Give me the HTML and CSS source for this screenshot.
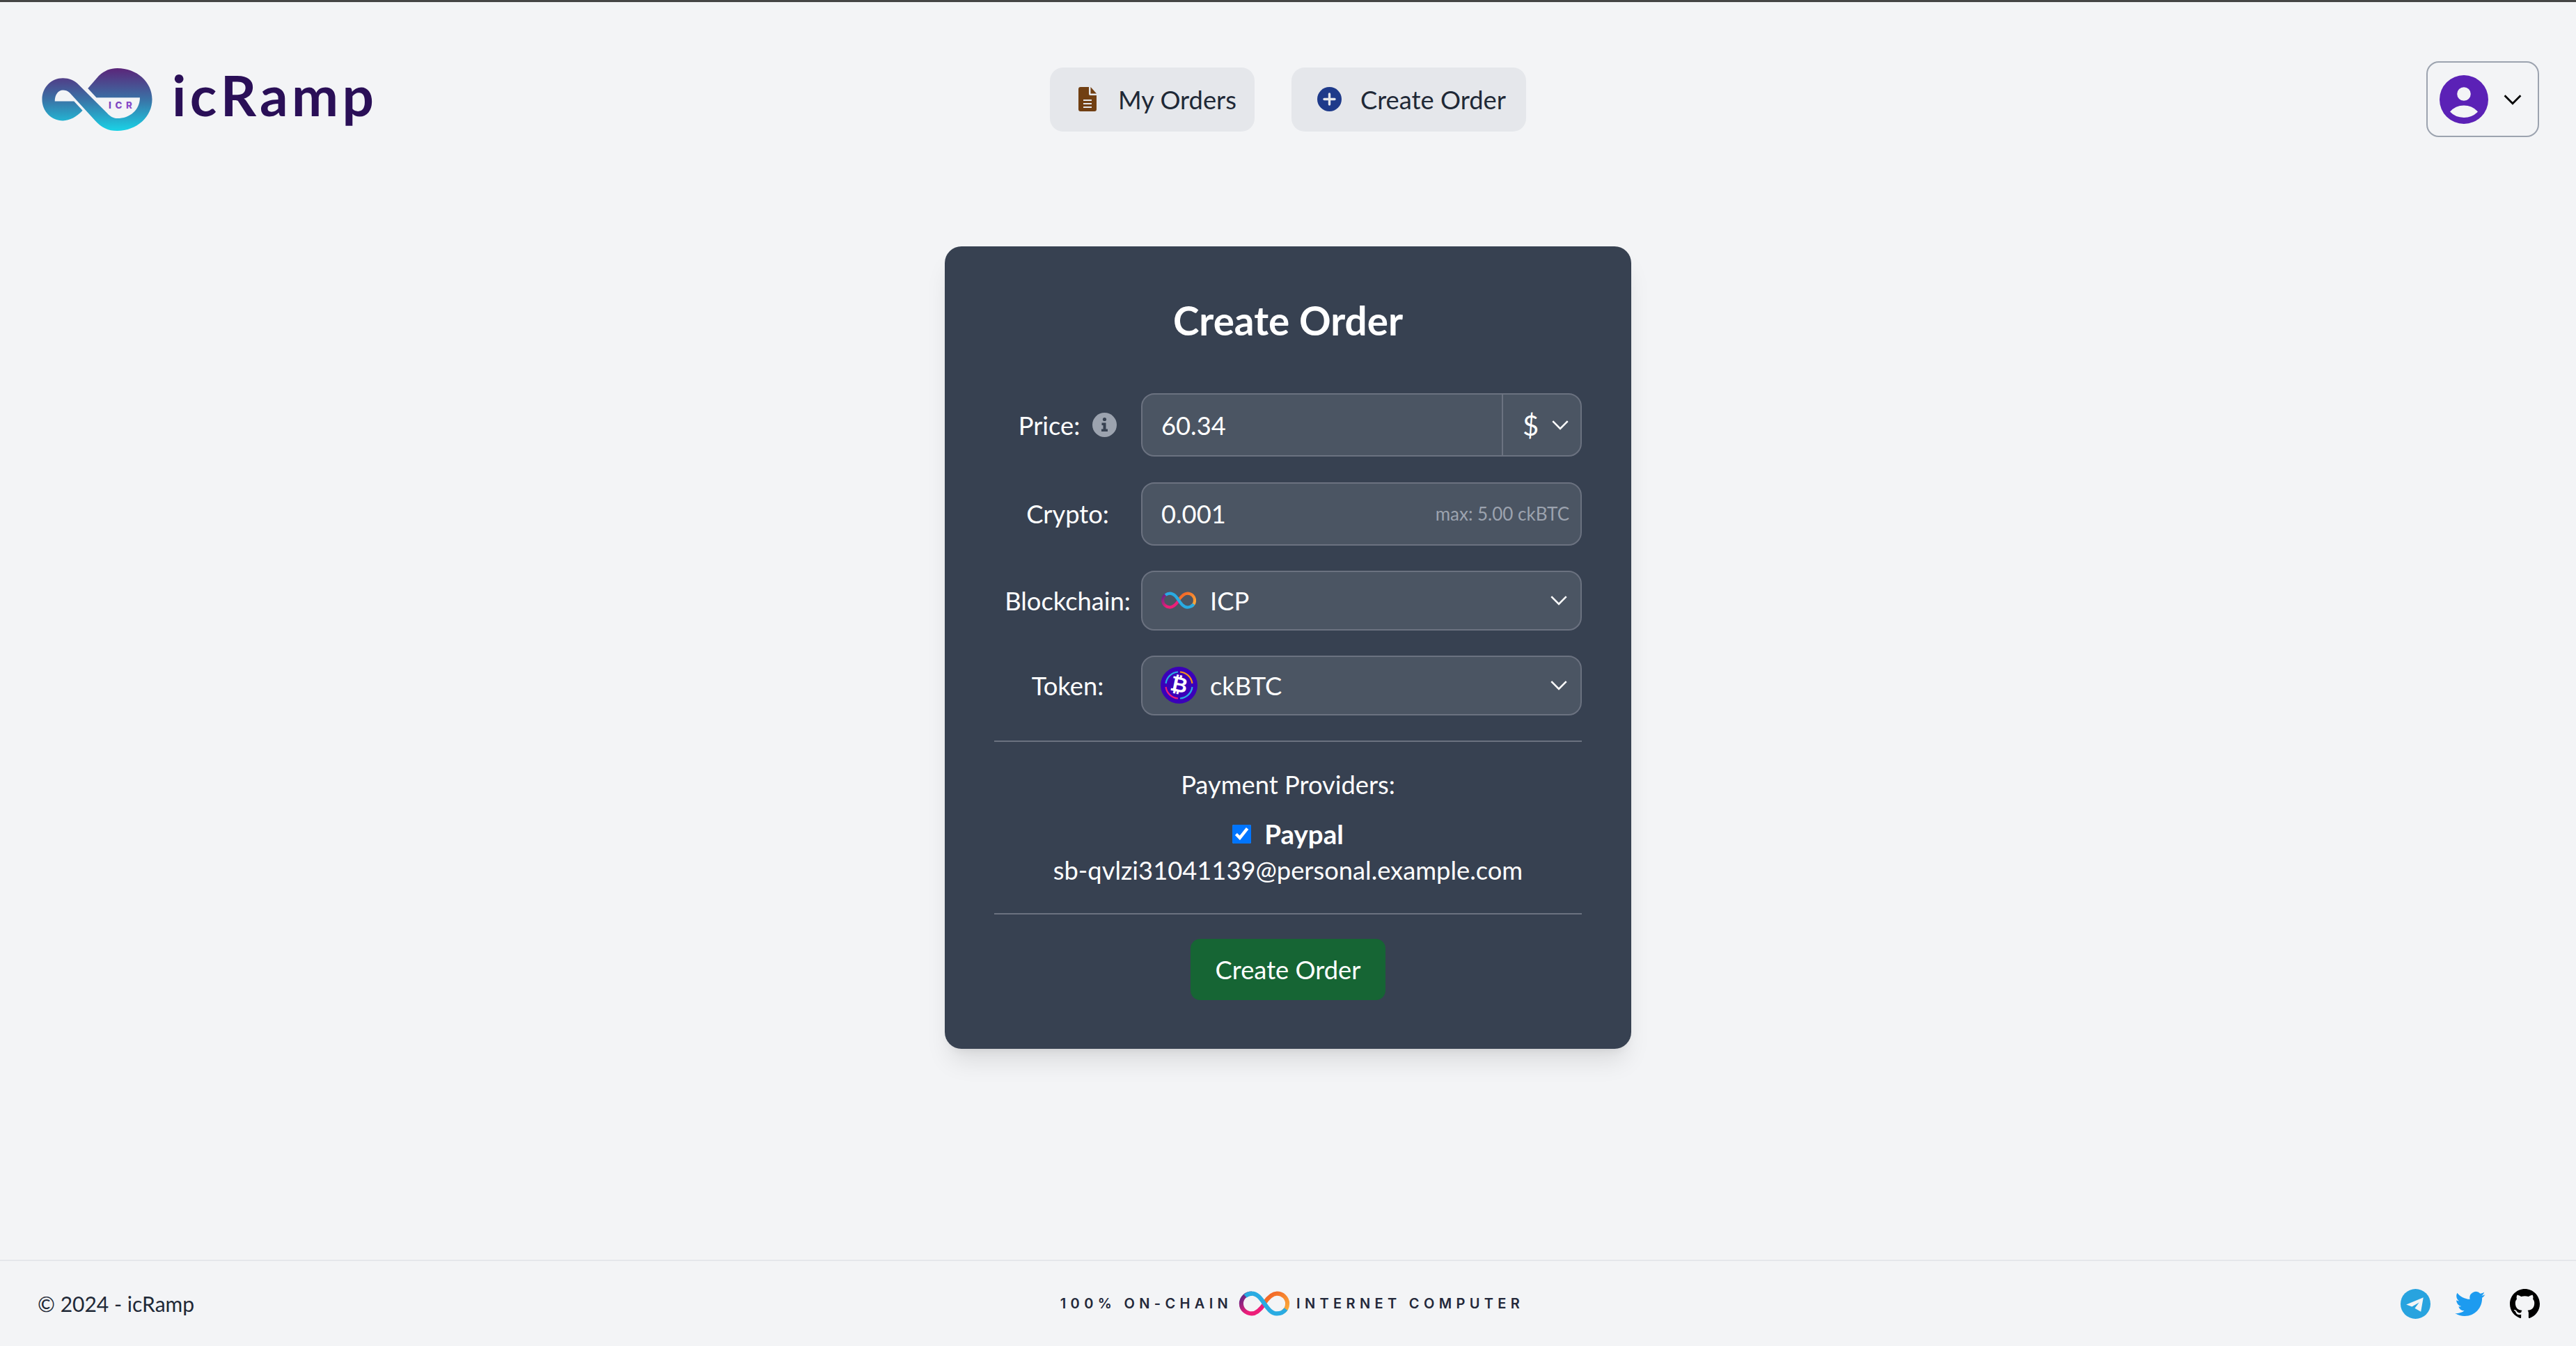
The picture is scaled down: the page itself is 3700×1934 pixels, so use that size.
FILE: index.html
```html
<!DOCTYPE html>
<html lang="en">
<head>
    <meta charset="UTF-8">
    <meta name="viewport" content="width=device-width, initial-scale=1.0">
    <title>icRamp</title>
    <link rel="stylesheet" href="styles.css">
</head>
<body>
    <svg class="defs" width="0" height="0">
        <defs>
            <linearGradient id="logoFill" x1="0" y1="0" x2="0" y2="1">
                <stop offset="0" stop-color="#5b2579"/>
                <stop offset="0.5" stop-color="#3a72a6"/>
                <stop offset="1" stop-color="#19d2e6"/>
            </linearGradient>
            <linearGradient id="icrFill" x1="0" y1="0" x2="1" y2="1">
                <stop offset="0" stop-color="#6a3bb5"/>
                <stop offset="1" stop-color="#9a52d6"/>
            </linearGradient>
            <linearGradient id="icpLeft" x1="0" y1="0" x2="1" y2="1">
                <stop offset="0" stop-color="#522785"/>
                <stop offset="0.6" stop-color="#ed1e79"/>
                <stop offset="1" stop-color="#ed1e79"/>
            </linearGradient>
            <linearGradient id="icpRight" x1="0" y1="0" x2="1" y2="1">
                <stop offset="0" stop-color="#f15a24"/>
                <stop offset="1" stop-color="#fbb03b"/>
            </linearGradient>
            <symbol id="icpMark" viewBox="0 0 100 50">
                <path d="M25 5C13 5 4 14 4 25C4 36 13 45 25 45C35 45 43 36 50 26" fill="none" stroke="url(#icpLeft)" stroke-width="8.5"/>
                <path d="M50 24C57 14 65 5 75 5C87 5 96 14 96 25C96 33 92 39 86 42" fill="none" stroke="url(#icpRight)" stroke-width="8.5"/>
                <path d="M12 10C16 6.500 20 5 25 5C36 5 43 15 50 25C57 35 64 45 75 45C82 45 88 43 93 36" fill="none" stroke="#29abe2" stroke-width="8.5"/>
            </symbol>
            <symbol id="chevron" viewBox="0 0 24 14">
                <path d="M2 2l10 10L22 2" fill="none" stroke="currentColor" stroke-width="2.400"/>
            </symbol>
        </defs>
    </svg>

    <header class="topbar">
        <a class="brand" href="#">
            <svg class="brand-mark" viewBox="60 45 476 271">
                <path fill="url(#logoFill)" d="M235 228C210 255 180 272 150 272C100 272 60 232 60 180C60 128 100 88 150 88C175 88 200 98 216 114L342 240C352 252 368 262 385 262C440 262 483 225 483 172L295 172L258 132L305 78C330 55 355 45 385 45C470 45 536 105 536 180C536 255 470 316 385 316C345 316 315 300 290 272L180 152C170 142 160 140 150 140C130 140 115 160 115 188L198 188Z"/>
                <text class="brand-icr" x="348" y="219" fill="url(#icrFill)">ICR</text>
            </svg>
            <span class="brand-name">icRamp</span>
        </a>
        <nav class="nav">
            <a class="nav-btn nav-btn-orders" href="#">
                <svg class="nav-icon nav-icon-file" viewBox="0 0 26 35">
                    <path fill="#713f12" fill-rule="evenodd" d="M3 0H15V10a2 2 0 0 0 2 2H26V32a3 3 0 0 1-3 3H3a3 3 0 0 1-3-3V3a3 3 0 0 1 3-3ZM7 18v2H19V18ZM7 23v2H19V23ZM7 28v2H19V28Z"/>
                    <path fill="#713f12" d="M17.500 0 26 9.500H17.500Z"/>
                </svg>
                <span>My Orders</span>
            </a>
            <a class="nav-btn nav-btn-create" href="#">
                <svg class="nav-icon" viewBox="0 0 35 35">
                    <circle cx="17.500" cy="17.500" r="17.500" fill="#1e3a8a"/>
                    <path d="M17.500 10v15M10 17.500h15" stroke="#e5e7eb" stroke-width="3.400" stroke-linecap="round"/>
                </svg>
                <span>Create Order</span>
            </a>
        </nav>
        <button class="profile-btn">
            <svg class="profile-icon" viewBox="-100 -100 200 200">
                <path fill="#5b21b6" fill-rule="evenodd" d="M-100 0a100 100 0 1 0 200 0a100 100 0 1 0-200 0ZM-28-23a28 28 0 1 0 56 0a28 28 0 1 0-56 0ZM-57 50Q-35 24 0 24Q35 24 57 50Q35 74 0 74Q-35 74-57 50Z"/>
            </svg>
            <svg class="profile-chevron"><use href="#chevron"/></svg>
        </button>
    </header>

    <main class="content">
        <form class="order-card">
            <h2 class="order-title">Create Order</h2>

            <div class="form-row">
                <label class="form-label">Price:
                    <svg class="info-icon" viewBox="0 0 35 35">
                        <circle cx="17.500" cy="17.500" r="17.500" fill="#9ca3af"/>
                        <circle cx="17.500" cy="9.500" r="2.600" fill="#374151"/>
                        <path fill="#374151" d="M13.500 14.500h6v9h2.500v3.500H13v-3.500h2.500v-5.500h-2Z"/>
                    </svg>
                </label>
                <div class="field">
                    <input class="field-input" type="text" value="60.34">
                    <button class="currency-btn" type="button">
                        <span>$</span>
                        <svg class="chevron"><use href="#chevron"/></svg>
                    </button>
                </div>
            </div>

            <div class="form-row">
                <label class="form-label">Crypto:</label>
                <div class="field">
                    <input class="field-input" type="text" value="0.001">
                    <span class="field-hint">max: 5.00 ckBTC</span>
                </div>
            </div>

            <div class="form-row form-row-select">
                <label class="form-label">Blockchain:</label>
                <button class="field select-btn" type="button">
                    <svg class="coin-icp"><use href="#icpMark"/></svg>
                    <span class="select-text">ICP</span>
                    <svg class="chevron"><use href="#chevron"/></svg>
                </button>
            </div>

            <div class="form-row form-row-select">
                <label class="form-label">Token:</label>
                <button class="field select-btn select-btn-token" type="button">
                    <svg class="coin-btc" viewBox="0 0 53 53">
                        <circle cx="26.500" cy="26.500" r="26.500" fill="#3b00b9"/>
                        <path d="M28 7.500A19 19 0 0 1 45.500 24" fill="none" stroke="#f7931a" stroke-width="2.200"/>
                        <path d="M45.500 29A19 19 0 0 1 28 45.500" fill="none" stroke="#29abe2" stroke-width="2.200"/>
                        <path d="M25 45.500A19 19 0 0 1 7.500 29" fill="none" stroke="#ed1e79" stroke-width="2.200"/>
                        <path d="M7.500 24A19 19 0 0 1 25 7.500" fill="none" stroke="#29abe2" stroke-width="2.200"/>
                        <text class="btc-glyph" x="26.500" y="36" transform="rotate(12 26.500 26.500)">₿</text>
                    </svg>
                    <span class="select-text">ckBTC</span>
                    <svg class="chevron"><use href="#chevron"/></svg>
                </button>
            </div>

            <hr class="divider">

            <div class="providers">
                <div class="providers-title">Payment Providers:</div>
                <label class="provider-check">
                    <input type="checkbox" checked>
                    <strong>Paypal</strong>
                </label>
                <div class="provider-email">sb-qvlzi31041139@personal.example.com</div>
            </div>

            <hr class="divider">

            <div class="submit-wrap">
                <button class="submit-btn" type="button">Create Order</button>
            </div>
        </form>
    </main>

    <footer class="footer">
        <div class="copyright">© 2024 - icRamp</div>
        <div class="onchain">
            <span>100% ON-CHAIN</span>
            <svg class="onchain-mark"><use href="#icpMark"/></svg>
            <span>INTERNET COMPUTER</span>
        </div>
        <div class="socials">
            <a href="#">
                <svg class="social-icon" viewBox="0 0 42 42">
                    <circle cx="21" cy="21" r="21" fill="#28a3df"/>
                    <path fill="#f3f4f6" d="M8 22 32 12 28.500 32 20 27 26 19 16 25Z"/>
                </svg>
            </a>
            <a href="#">
                <svg class="social-icon social-icon-twitter" viewBox="0 0 24 24">
                    <path fill="#1d9bf0" d="M23.953 4.570a10 10 0 0 1-2.825.775 4.958 4.958 0 0 0 2.163-2.723c-.951.555-2.005.959-3.127 1.184a4.920 4.920 0 0 0-8.384 4.482C7.690 8.095 4.067 6.130 1.640 3.162a4.822 4.822 0 0 0-.666 2.475c0 1.710.870 3.213 2.188 4.096a4.904 4.904 0 0 1-2.228-.616v.060a4.923 4.923 0 0 0 3.946 4.827 4.996 4.996 0 0 1-2.212.085 4.936 4.936 0 0 0 4.604 3.417 9.867 9.867 0 0 1-6.102 2.105c-.390 0-.779-.023-1.170-.067a13.995 13.995 0 0 0 7.557 2.209c9.053 0 13.998-7.496 13.998-13.985 0-.210 0-.420-.015-.630A9.935 9.935 0 0 0 24 4.590z"/>
                </svg>
            </a>
            <a href="#">
                <svg class="social-icon" viewBox="0 0 16 16">
                    <path fill="#000" d="M8 0C3.580 0 0 3.580 0 8c0 3.540 2.290 6.530 5.470 7.590.400.070.550-.170.550-.380 0-.190-.010-.820-.010-1.490-2.010.370-2.530-.490-2.690-.940-.090-.230-.480-.940-.820-1.130-.280-.150-.680-.520-.010-.530.630-.010 1.080.580 1.230.820.720 1.210 1.870.870 2.330.660.070-.520.280-.870.510-1.070-1.780-.200-3.640-.890-3.640-3.950 0-.870.310-1.590.820-2.150-.080-.200-.360-1.020.080-2.120 0 0 .670-.210 2.200.820.640-.180 1.320-.270 2-.270.680 0 1.360.090 2 .270 1.530-1.040 2.200-.820 2.200-.820.440 1.100.160 1.920.080 2.120.510.560.820 1.270.820 2.150 0 3.070-1.870 3.750-3.650 3.950.290.250.540.730.540 1.480 0 1.070-.010 1.930-.010 2.200 0 .210.150.460.550.380A8.013 8.013 0 0 0 16 8c0-4.420-3.580-8-8-8z"/>
                </svg>
            </a>
        </div>
    </footer>
</body>
</html>
```

FILE: styles.css
```css
* {
    box-sizing: border-box;
}
html, body {
    height: 100%;
}
body {
    margin: 0;
    display: flex;
    flex-direction: column;
    min-height: 1934px;
    background: #f3f4f6;
    border-top: 3px solid #454545;
    font-family: Lato, "Noto Sans", sans-serif;
    font-size: 36.3px;
    color: #1f2937;
}
a {
    color: inherit;
    text-decoration: none;
}
button {
    font-family: inherit;
    cursor: pointer;
}
.defs {
    display: block;
    width: 0;
    height: 0;
}

/* top bar */
.topbar {
    display: grid;
    grid-template-columns: 1fr auto 1fr;
    align-items: center;
    padding: 85px 53px 0;
}
.brand {
    display: flex;
    align-items: center;
    gap: 28px;
    margin-left: 7px;
}
.brand-mark {
    width: 159px;
    height: 90px;
}
.brand-icr {
    font-family: Inter, sans-serif;
    font-size: 40px;
    font-weight: 800;
    letter-spacing: 17px;
}
.brand-name {
    margin-bottom: 14px;
    font-size: 80px;
    line-height: 90px;
    font-weight: 700;
    letter-spacing: 5.5px;
    color: #2a0f57;
}
.nav {
    display: flex;
    gap: 53px;
}
.nav-btn {
    display: flex;
    align-items: center;
    gap: 31px;
    height: 92px;
    background: #e5e7eb;
    border-radius: 19px;
}
.nav-btn-orders {
    width: 294px;
    padding-left: 41px;
}
.nav-btn-create {
    width: 337px;
    padding-left: 37px;
    gap: 27px;
}
.nav-icon {
    width: 35px;
    height: 35px;
}
.nav-icon-file {
    width: 26px;
}
.profile-btn {
    justify-self: end;
    display: flex;
    align-items: center;
    gap: 21px;
    width: 162px;
    height: 109px;
    padding: 0 0 0 17px;
    background: transparent;
    border: 2px solid #9ca3af;
    border-radius: 18px;
}
.profile-icon {
    width: 70px;
    height: 70px;
}
.profile-chevron {
    width: 28px;
    height: 16px;
    color: #000;
}

/* order form */
.content {
    flex: 1;
    display: flex;
    justify-content: center;
    padding-top: 157px;
}
.order-card {
    width: 986px;
    height: 1153px;
    padding: 67px 71px 70px;
    background: #374151;
    border-radius: 24px;
    color: #fff;
    box-shadow: 0 24px 35px -7px rgba(0, 0, 0, 0.1), 0 9px 14px -9px rgba(0, 0, 0, 0.1);
}
.order-title {
    margin: 0 0 66px;
    font-size: 56.6px;
    line-height: 78px;
    font-weight: 700;
    text-align: center;
}
.form-row {
    display: grid;
    grid-template-columns: 211px 633px;
    height: 91px;
    margin-bottom: 36.5px;
}
.form-row-select {
    height: 85.5px;
}
.form-label {
    display: flex;
    align-items: center;
    justify-content: center;
    gap: 18px;
}
.info-icon {
    width: 35px;
    height: 35px;
}
.field {
    display: flex;
    align-items: center;
    background: #4b5563;
    border: 2px solid #6b7280;
    border-radius: 19px;
    color: #fff;
}
.field-input {
    flex: 1;
    min-width: 0;
    height: 100%;
    padding: 0 0 0 27px;
    background: transparent;
    border: none;
    outline: none;
    font-family: inherit;
    font-size: inherit;
    color: #fff;
}
.field-hint {
    padding-right: 16px;
    font-size: 26px;
    color: #9ca3af;
}
.currency-btn {
    display: flex;
    align-items: center;
    gap: 18px;
    width: 113px;
    height: 100%;
    padding: 0 0 0 28px;
    background: transparent;
    border: none;
    border-left: 2px solid #6b7280;
    font-size: 40px;
    color: #fff;
}
.chevron {
    flex: none;
    width: 26px;
    height: 15px;
    color: #fff;
}
.select-btn {
    width: 100%;
    padding: 0 18px 0 27px;
    font-size: inherit;
    text-align: left;
}
.select-btn-token {
    padding-left: 26px;
}
.coin-icp {
    flex: none;
    width: 50px;
    height: 25px;
    margin-right: 20px;
}
.coin-btc {
    flex: none;
    width: 53px;
    height: 53px;
    margin-right: 18px;
}
.btc-glyph {
    font-family: "DejaVu Sans", sans-serif;
    font-size: 30px;
    font-weight: 700;
    text-anchor: middle;
    fill: #fff;
}
.select-text {
    flex: 1;
}
.divider {
    height: 2px;
    margin: 0;
    background: #6b7280;
    border: none;
}
.providers {
    padding: 33px 0 36px;
    text-align: center;
}
.providers-title {
    line-height: 57px;
}
.provider-check {
    display: flex;
    align-items: center;
    justify-content: center;
    gap: 19px;
    height: 52px;
    margin-top: 16px;
}
.provider-check input {
    width: 27px;
    height: 27px;
    margin: 0;
}
.provider-check strong {
    font-size: 38.5px;
    font-weight: 700;
}
.provider-email {
    line-height: 52px;
}
.submit-wrap {
    display: flex;
    justify-content: center;
    padding-top: 35px;
}
.submit-btn {
    width: 280px;
    height: 88px;
    background: #166534;
    border: none;
    border-radius: 14px;
    font-size: inherit;
    color: #fff;
}

/* footer */
.footer {
    display: grid;
    grid-template-columns: 1fr auto 1fr;
    align-items: center;
    height: 124px;
    padding: 0 52px 0 54px;
    border-top: 2px solid #e5e7eb;
}
.copyright {
    font-size: 30px;
}
.onchain {
    display: flex;
    align-items: center;
    gap: 8px;
    margin-left: 10px;
    font-family: Inter, sans-serif;
    font-size: 20px;
    font-weight: 600;
    letter-spacing: 6.35px;
    color: #23283a;
}
.onchain-mark {
    width: 76px;
    height: 36px;
}
.socials {
    justify-self: end;
    display: flex;
    align-items: center;
    gap: 34px;
}
.socials a {
    display: flex;
}
.social-icon {
    width: 43px;
    height: 43px;
}
.social-icon-twitter {
    width: 46px;
}
```
